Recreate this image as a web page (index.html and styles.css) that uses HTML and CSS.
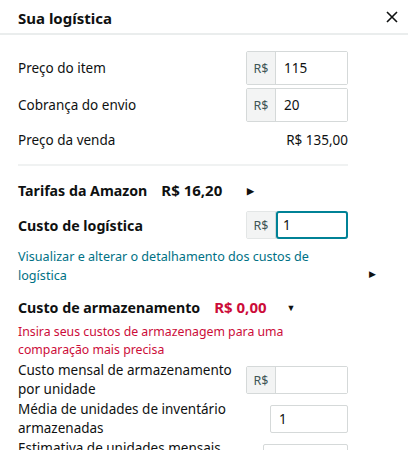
FILE: index.html
```html
<!DOCTYPE html>
<html lang="pt-BR">

<head>
    <meta charset="UTF-8">
    <meta name="viewport" content="width=device-width, initial-scale=1.0">
    <title>Sua logística</title>
    <link rel="stylesheet" href="styles.css">
</head>

<body>

    <div class="panel">
        <div class="panel-header">
            <h1>Sua logística</h1>
            <button class="close-btn" aria-label="Fechar">
                <svg width="12" height="12" viewBox="0 0 12 12">
                    <path d="M1 1 L11 11 M11 1 L1 11" stroke="#0f1111" stroke-width="1.6" fill="none" />
                </svg>
            </button>
        </div>

        <div class="panel-body">
            <div class="price-rows">
                <div class="row">
                    <label for="item-price">Preço do item</label>
                    <div class="money-input">
                        <span class="prefix">R$</span>
                        <input type="text" id="item-price" value="115">
                    </div>
                </div>
                <div class="row">
                    <label for="shipping">Cobrança do envio</label>
                    <div class="money-input">
                        <span class="prefix">R$</span>
                        <input type="text" id="shipping" value="20">
                    </div>
                </div>
                <div class="row sale-row">
                    <span>Preço da venda</span>
                    <span class="sale-total">R$ 135,00</span>
                </div>
            </div>

            <hr class="divider">

            <div class="section-title">
                <span>Tarifas da Amazon</span>
                <span class="amount">R$ 16,20</span>
                <span class="arrow">&#9654;</span>
            </div>

            <div class="row logistics-row">
                <label for="logistics" class="bold">Custo de logística</label>
                <div class="money-input small focused">
                    <span class="prefix">R$</span>
                    <input type="text" id="logistics" value="1">
                </div>
            </div>

            <div class="link-row">
                <a href="#" class="link">Visualizar e alterar o detalhamento dos custos de logística</a>
                <span class="arrow">&#9654;</span>
            </div>

            <div class="section-title storage-title">
                <span>Custo de armazenamento</span>
                <span class="amount red">R$ 0,00</span>
                <span class="arrow">&#9660;</span>
            </div>
            <p class="warning">Insira seus custos de armazenagem para uma comparação mais precisa</p>

            <div class="row storage-row">
                <label for="monthly-cost">Custo mensal de armazenamento por unidade</label>
                <div class="money-input small">
                    <span class="prefix">R$</span>
                    <input type="text" id="monthly-cost" value="">
                </div>
            </div>
            <div class="row storage-row">
                <label for="avg-units">Média de unidades de inventário armazenadas</label>
                <input type="text" id="avg-units" class="plain-input" value="1">
            </div>
            <div class="row storage-row">
                <label for="monthly-units">Estimativa de unidades mensais vendidas</label>
                <input type="text" id="monthly-units" class="plain-input wide" value="">
            </div>
        </div>
    </div>

</body>

</html>
```

FILE: styles.css
```css
body {
    margin: 0;
    padding: 0;
    background-color: #ffffff;
    font-family: "Noto Sans", Arial, sans-serif;
    font-size: 13.5px;
    color: #0f1111;
    overflow: hidden;
}

.panel {
    width: 408px;
}

.panel-header {
    display: flex;
    align-items: center;
    justify-content: space-between;
    height: 33px;
    padding: 0 10px 0 18px;
    border-bottom: 2px solid #eaeded;
}

.panel-header h1 {
    margin: 0;
    font-size: 15px;
    font-weight: bold;
    position: relative;
    top: 1px;
}

.close-btn {
    background: none;
    border: none;
    padding: 0;
    width: 12px;
    height: 12px;
    cursor: pointer;
}

.panel-body {
    padding: 16px 18px 0 18px;
    width: 372px;
}

.row {
    display: flex;
    align-items: center;
    justify-content: space-between;
    width: 330px;
}

.price-rows .row + .row {
    margin-top: 3px;
}

.money-input {
    display: flex;
    width: 102px;
    height: 34px;
    box-sizing: border-box;
    border: 1px solid #d5d9d9;
    border-radius: 2px;
}

.money-input .prefix {
    width: 28px;
    background-color: #f3f4f4;
    border-right: 1px solid #d5d9d9;
    display: flex;
    align-items: center;
    justify-content: center;
    color: #3f5656;
    font-size: 12.5px;
}

.money-input input,
.plain-input {
    font-family: inherit;
    font-size: 13.5px;
    color: #0f1111;
    border: none;
    outline: none;
    padding: 0 8px;
    min-width: 0;
    flex: 1;
}

.money-input.small {
    height: 28px;
}

.money-input.focused {
    border-color: #e3e6e6;
}

.money-input.focused input {
    border: 2px solid #008296;
    border-radius: 3px;
    margin: -1px -1px -1px 0;
    padding: 0 5px;
}

.sale-row {
    height: 30px;
    margin-top: 2px;
}

.divider {
    width: 330px;
    margin: 9px 0 0 0;
    border: none;
    border-top: 2px solid #f0f2f2;
}

.section-title {
    display: flex;
    align-items: center;
    font-weight: bold;
    font-size: 14.2px;
    height: 24px;
    margin-top: 12px;
}

.section-title .amount {
    margin-left: 14px;
    font-size: 15px;
}

.section-title .arrow {
    font-size: 9px;
    margin-left: 25px;
}

.amount.red {
    color: #cc0c39;
}

.logistics-row {
    margin-top: 9px;
}

.bold {
    font-weight: bold;
    font-size: 14.2px;
}

.link-row {
    display: flex;
    align-items: flex-end;
    margin-top: 8px;
}

.link {
    display: block;
    flex: none;
    color: #007185;
    font-size: 12.6px;
    text-decoration: none;
    width: 310px;
    line-height: 19px;
    word-spacing: 0;
}

.link-row .arrow {
    font-size: 9px;
    margin-left: auto;
    margin-right: 14px;
    margin-bottom: 5px;
}

.storage-title {
    margin-top: 10px;
}

.storage-title .arrow {
    margin-left: 20px;
}

.warning {
    margin: 4px 0 0 0;
    color: #cc0c39;
    font-size: 12.3px;
    line-height: 18px;
    width: 300px;
}

.storage-row {
    margin-top: 2px;
}

.storage-row label {
    width: 220px;
    line-height: 19px;
}

.storage-row + .storage-row {
    margin-top: 1px;
}

.plain-input {
    flex: none;
    width: 78px;
    height: 28px;
    box-sizing: border-box;
    border: 1px solid #d5d9d9;
    border-radius: 2px;
}

.plain-input.wide {
    width: 85px;
}
```
